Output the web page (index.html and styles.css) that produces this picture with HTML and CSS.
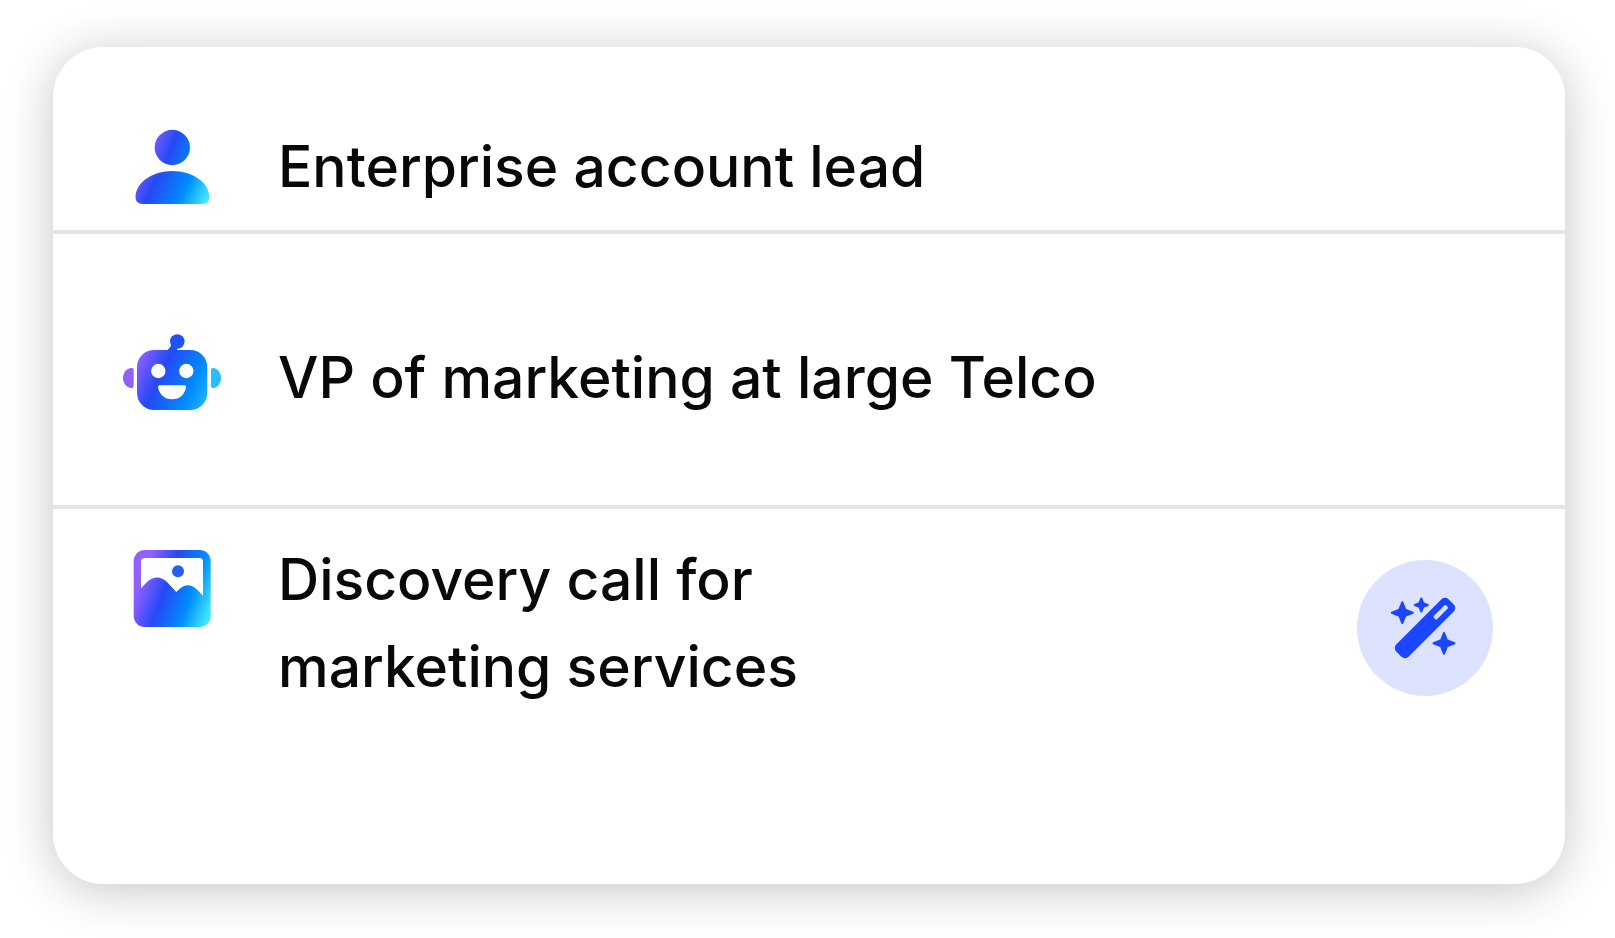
FILE: index.html
```
<!DOCTYPE html>
<html lang="en">
<head>
  <meta charset="UTF-8" />
  <meta name="viewport" content="width=device-width, initial-scale=1" />
  <title>Roleplay setup</title>
  <link rel="stylesheet" href="styles.css">
</head>
<body>
  <main class="card">
    <div class="row row-lead">
      <svg class="icon" viewBox="0 0 100 92" aria-hidden="true">
        <defs>
          <linearGradient id="person-fill" gradientUnits="userSpaceOnUse" x1="12" y1="38" x2="86" y2="71">
            <stop offset="0" stop-color="#9160ff" />
            <stop offset="0.34" stop-color="#2549f5" />
            <stop offset="0.72" stop-color="#008cff" />
            <stop offset="1" stop-color="#3fe4ff" />
          </linearGradient>
          <linearGradient id="head-fill" gradientUnits="userSpaceOnUse" x1="26" y1="17" x2="72" y2="35">
            <stop offset="0" stop-color="#9160ff" />
            <stop offset="0.5" stop-color="#2549f5" />
            <stop offset="1" stop-color="#008cff" />
          </linearGradient>
        </defs>
        <circle cx="50.3" cy="24.5" r="17.7" fill="url(#head-fill)" />
        <path fill="url(#person-fill)" d="M21 81Q13.5 81 13.5 74C13.5 60 30 48 50.4 48S87.3 60 87.3 74Q87.3 81 80 81Z" />
      </svg>
      <p class="text">Enterprise account lead</p>
    </div>

    <div class="row row-persona">
      <svg class="icon" viewBox="0 0 100 92" aria-hidden="true">
        <defs>
          <linearGradient id="robot-fill" gradientUnits="userSpaceOnUse" x1="12" y1="30" x2="88" y2="66">
            <stop offset="0" stop-color="#9160ff" />
            <stop offset="0.34" stop-color="#2549f5" />
            <stop offset="0.75" stop-color="#008cff" />
            <stop offset="1" stop-color="#22b8ff" />
          </linearGradient>
        </defs>
        <g fill="url(#robot-fill)">
          <rect x="15" y="16" width="70.3" height="60" rx="17" />
          <path d="M45 17Q49 14.500 50 10L57 13Q54.500 14.500 54.700 17Z" />
        </g>
        <circle cx="55.3" cy="7.5" r="7.3" fill="#2152f4" />
        <path d="M45 17Q49 13 50 9L57 13Q54.500 14.500 54.700 17Z" fill="#2152f4" />
        <path fill="#9160f5" d="M11.7 36v16q0 2.6-3 2C4 53 1 49 1 44s3-9 7.7-10q3-.6 3 2z" />
        <path fill="#27bdff" d="M89 36v16q0 2.6 3 2C96 53 99 49 99 44s-3-9-7-10q-3-.6-3 2z" />
        <g fill="#fff">
          <circle cx="36.3" cy="37" r="7.2" />
          <circle cx="64.3" cy="37" r="7.2" />
          <path d="M37.5 51.3H62.7Q64.3 51.3 64 53C63 60.5 57.5 65.3 50.2 65.3S37 60.5 36 53Q36 51.3 37.500 51.300Z" />
        </g>
      </svg>
      <p class="text">VP of marketing at large Telco</p>
    </div>

    <div class="row row-scenario">
      <svg class="icon" viewBox="0 0 100 92" aria-hidden="true">
        <defs>
          <linearGradient id="image-fill" gradientUnits="userSpaceOnUse" x1="20" y1="42" x2="90" y2="68">
            <stop offset="0" stop-color="#9160ff" />
            <stop offset="0.34" stop-color="#2549f5" />
            <stop offset="0.7" stop-color="#008cff" />
            <stop offset="1" stop-color="#3fe4ff" />
          </linearGradient>
        </defs>
        <rect x="11.7" y="14" width="77" height="77" rx="11" fill="url(#image-fill)" />
        <path fill="#fff" d="M19 52.3V25.5Q19 22 22.500 22H77.500Q81 22 81 25.5V59.7L76 54.5C70 48 63 47.5 57.5 53L54.3 56 45 46C39 40 31 40 25 46Z" />
        <circle cx="56" cy="35.3" r="6" fill="#2560f0" />
      </svg>
      <p class="text text-scenario">Discovery call for marketing services</p>
      <button class="magic-btn" type="button" aria-label="Generate scenario">
        <svg viewBox="0 0 136 136" aria-hidden="true">
          <g fill="#1a46ff" stroke="#1a46ff" stroke-width="2" stroke-linejoin="round">
            <path d="M45.3 42.2L48.3 49.7 55.8 52.7 48.3 55.7 45.3 63.2 42.3 55.7 34.8 52.7 42.3 49.7Z" />
            <path d="M64.3 38.5L66.2 43.1 70.8 45 66.2 46.9 64.3 51.5 62.4 46.9 57.8 45 62.4 43.1Z" />
            <path d="M87 72.8L90 80.3 97.5 83.3 90 86.3 87 93.8 84 86.3 76.5 83.3 84 80.3Z" />
          </g>
          <g transform="translate(68 68) rotate(-45)">
            <rect x="-37" y="-8.7" width="74" height="17.4" rx="5" fill="#1a46ff" />
            <rect x="13.5" y="-2.3" width="17.5" height="4.6" rx="1.5" fill="#dde3ff" />
          </g>
        </svg>
      </button>
    </div>
  </main>
</body>
</html>
```
FILE: styles.css
```
* {
  box-sizing: border-box;
}

body {
  margin: 0;
  padding: 47px 50px 55px 53px;
  font-family: 'Inter', sans-serif;
  background: #fff;
  color: #080808;
}

.card {
  background: #fff;
  border-radius: 50px;
  box-shadow: 0 6px 50px rgba(0, 0, 0, 0.23);
}

.row {
  display: flex;
  align-items: flex-start;
  padding-left: 69px;
  padding-right: 72px;
}

.row-lead {
  padding-top: 76px;
  padding-bottom: 15px;
  border-bottom: 4px solid #e4e4e4;
}

.row-persona {
  padding-top: 100px;
  padding-bottom: 79px;
  border-bottom: 4px solid #e4e4e4;
}

.row-scenario {
  padding-top: 27px;
  padding-bottom: 174px;
}

.icon {
  flex: none;
  width: 100px;
  height: 92px;
  margin-right: 56px;
}

.text {
  flex: 1;
  margin: 0;
  font-size: 57px;
  font-weight: 500;
  line-height: 87px;
}

.text-scenario {
  flex: 0 1 620px;
}

.magic-btn {
  flex: none;
  width: 136px;
  height: 136px;
  margin-top: 24px;
  margin-left: auto;
  padding: 0;
  border: none;
  border-radius: 50%;
  background: #dde3ff;
  cursor: pointer;
}

.magic-btn:hover {
  background: #cfd7ff;
}

.magic-btn svg {
  display: block;
  width: 100%;
}
```
